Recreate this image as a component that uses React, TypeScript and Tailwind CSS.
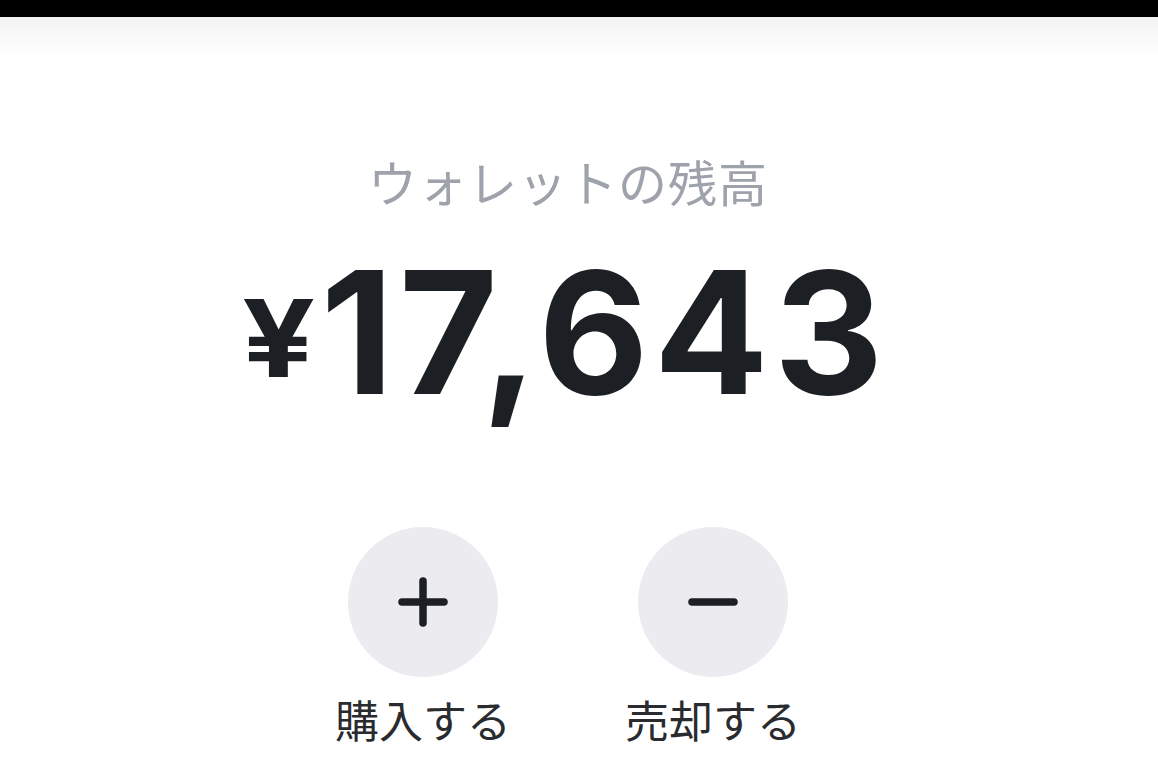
import React from 'react';

const jp = { fontFamily: '"Noto Sans CJK JP", "Noto Sans", sans-serif' };

const ActionButton: React.FC<{ label: string; kind: 'plus' | 'minus' }> = ({ label, kind }) => (
  <div className="flex flex-col items-center w-[170px]">
    <button className="w-[150px] h-[150px] rounded-full bg-[#ebebf0] flex items-center justify-center">
      <svg width="50" height="50" viewBox="0 0 50 50" fill="none" stroke="#1c1f23" strokeWidth="7.5" strokeLinecap="round">
        <path d="M4 25h42" />
        {kind === 'plus' && <path d="M25 4v42" />}
      </svg>
    </button>
    <span className="mt-[20px] text-[44px] leading-none text-[#2a2b2e] whitespace-nowrap" style={jp}>
      {label}
    </span>
  </div>
);

export default function App() {
  return (
    <div className="w-[1158px] h-[764px] bg-white overflow-hidden flex flex-col">
      <div className="h-[17px] bg-black shrink-0" />
      <div className="h-[40px] shrink-0 bg-gradient-to-b from-[#f3f3f3] to-white" />
      <div className="flex flex-col items-center pr-[22px]">
        <h2 className="mt-[99px] text-[49px] leading-none text-[#9ea2ab] tracking-[1px]" style={jp}>
          ウォレットの残高
        </h2>
        <div
          className="mt-[42px] flex items-start text-[#1c1f23] font-bold leading-none"
          style={{ fontFamily: 'Inter, "Liberation Sans", sans-serif' }}
        >
          <span className="text-[107px] mt-[38px] mr-[12px] inline-block scale-x-[1.2]">¥</span>
          <span className="text-[170px] tracking-[5px]">17,643</span>
        </div>
        <div className="mt-[110px] flex gap-[120px]">
          <ActionButton label="購入する" kind="plus" />
          <ActionButton label="売却する" kind="minus" />
        </div>
      </div>
    </div>
  );
}
